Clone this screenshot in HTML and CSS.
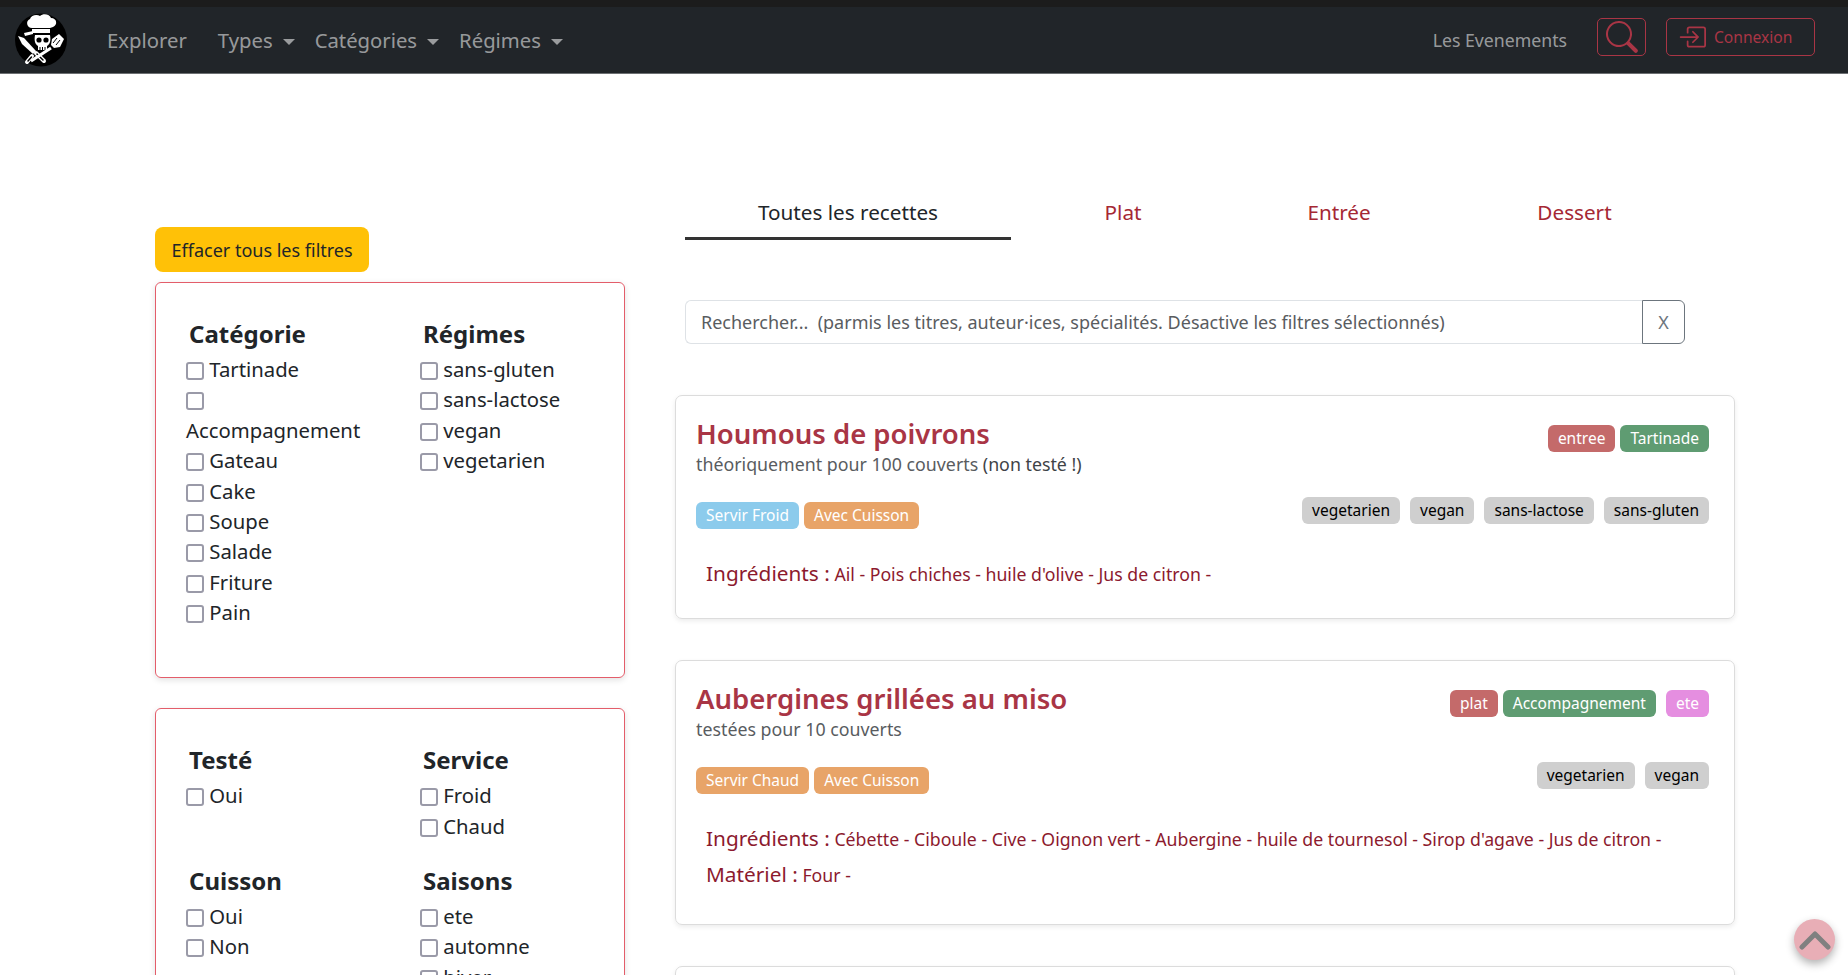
FILE: index.html
```html
<!DOCTYPE html>
<html lang="fr">
<head>
    <meta charset="UTF-8">
    <title>Recettes</title>
    <link rel="stylesheet" href="styles.css">
</head>
<body>

    <nav class="navbar">
        <a class="logo" href="#">
            <svg width="52" height="54" viewBox="0 0 52 54">
                <ellipse cx="26" cy="27" rx="26" ry="26.5" fill="#000"/>
                <!-- toque -->
                <path d="M17 15c-5 0-7-7-2-9 1-4 7-5 10-3 3-3 10-2 11 2 6 0 7 7 2 9l-3 1H19z" fill="#fff"/>
                <!-- bandana -->
                <path d="M17 16h18v4H17z" fill="#fff"/>
                <path d="M18 18L9 20l1 3 8-2" fill="#fff"/>
                <!-- skull -->
                <path d="M20 22h15c1 6 0 9-3 11v4H23v-4c-3-2-4-5-3-11z" fill="#fff"/>
                <circle cx="24" cy="27" r="2.600" fill="#000"/>
                <circle cx="31" cy="27" r="2.600" fill="#000"/>
                <path d="M25 34v3M27.500 34v3M30 34v3" stroke="#000" stroke-width="1"/>
                <!-- knife -->
                <path d="M3 23l6 2 12 13-3 3L7 31z" fill="#fff"/>
                <path d="M21 40l8 8" stroke="#fff" stroke-width="4" stroke-linecap="round"/>
                <path d="M22 41l6 6" stroke="#000" stroke-width="1.500" stroke-linecap="round"/>
                <!-- spatula -->
                <path d="M44 21l5 5-4 8-6 1-3-3 1-6z" fill="#fff"/>
                <path d="M42 25l-4 5M45 27l-4 5" stroke="#000" stroke-width="1"/>
                <path d="M36 35L16 48" stroke="#fff" stroke-width="3"/>
                <path d="M17 43l-5 6" stroke="#fff" stroke-width="4" stroke-linecap="round"/>
                <path d="M16.500 44l-3.500 4" stroke="#000" stroke-width="1.500" stroke-linecap="round"/>
            </svg>
        </a>
        <ul class="nav-links">
            <li class="nav-first"><a href="#">Explorer</a></li>
            <li><a href="#" class="caret">Types</a></li>
            <li><a href="#" class="caret">Catégories</a></li>
            <li><a href="#" class="caret">Régimes</a></li>
        </ul>
        <div class="nav-right">
            <a href="#" class="events">Les Evenements</a>
            <button class="btn-outline btn-search" aria-label="Rechercher">
                <svg width="32" height="32" viewBox="0 0 16 16" fill="currentColor">
                    <path d="M11.742 10.344a6.5 6.5 0 1 0-1.397 1.398l3.85 3.85a1 1 0 0 0 1.415-1.414l-3.85-3.85zM6.5 12a5.5 5.5 0 1 1 0-11 5.5 5.5 0 0 1 0 11z"/>
                </svg>
            </button>
            <button class="btn-outline btn-login">
                <svg width="28" height="28" viewBox="0 0 16 16" fill="currentColor">
                    <path fill-rule="evenodd" d="M6 3.5a.5.5 0 0 1 .5-.5h8a.5.5 0 0 1 .5.5v9a.5.5 0 0 1-.5.5h-8a.5.5 0 0 1-.5-.5v-2a.5.5 0 0 0-1 0v2A1.5 1.5 0 0 0 6.500 14h8a1.500 1.500 0 0 0 1.500-1.500v-9A1.500 1.500 0 0 0 14.500 2h-8A1.500 1.500 0 0 0 5 3.500v2a.5.5 0 0 0 1 0v-2z"/>
                    <path fill-rule="evenodd" d="M11.854 8.354a.5.5 0 0 0 0-.708l-3-3a.5.5 0 1 0-.708.708L10.293 7.500H1.500a.5.5 0 0 0 0 1h8.793l-2.147 2.146a.5.5 0 0 0 .708.708l3-3z"/>
                </svg>
                Connexion
            </button>
        </div>
    </nav>

    <main class="page">
        <aside class="filters">
            <button class="btn-clear">Effacer tous les filtres</button>

            <div class="filter-box">
                <div class="filter-group">
                    <h3>Catégorie</h3>
                    <label><input type="checkbox"> Tartinade</label>
                    <label><input type="checkbox"> Accompagnement</label>
                    <label><input type="checkbox"> Gateau</label>
                    <label><input type="checkbox"> Cake</label>
                    <label><input type="checkbox"> Soupe</label>
                    <label><input type="checkbox"> Salade</label>
                    <label><input type="checkbox"> Friture</label>
                    <label><input type="checkbox"> Pain</label>
                </div>
                <div class="filter-group">
                    <h3>Régimes</h3>
                    <label><input type="checkbox"> sans-gluten</label>
                    <label><input type="checkbox"> sans-lactose</label>
                    <label><input type="checkbox"> vegan</label>
                    <label><input type="checkbox"> vegetarien</label>
                </div>
            </div>

            <div class="filter-box">
                <div class="filter-group">
                    <h3>Testé</h3>
                    <label><input type="checkbox"> Oui</label>
                </div>
                <div class="filter-group">
                    <h3>Service</h3>
                    <label><input type="checkbox"> Froid</label>
                    <label><input type="checkbox"> Chaud</label>
                </div>
                <div class="filter-group">
                    <h3>Cuisson</h3>
                    <label><input type="checkbox"> Oui</label>
                    <label><input type="checkbox"> Non</label>
                </div>
                <div class="filter-group">
                    <h3>Saisons</h3>
                    <label><input type="checkbox"> ete</label>
                    <label><input type="checkbox"> automne</label>
                    <label><input type="checkbox"> hiver</label>
                </div>
            </div>
        </aside>

        <section class="recipes">
            <div class="tabs">
                <a href="#" class="tab active">Toutes les recettes</a>
                <a href="#" class="tab tab-plat">Plat</a>
                <a href="#" class="tab tab-entree">Entrée</a>
                <a href="#" class="tab tab-dessert">Dessert</a>
            </div>

            <div class="search-row">
                <input class="search-input" type="text" placeholder="Rechercher...  (parmis les titres, auteur·ices, spécialités. Désactive les filtres sélectionnés)">
                <button class="search-clear">X</button>
            </div>

            <article class="card">
                <div class="card-top">
                    <div>
                        <h2>Houmous de poivrons</h2>
                        <p class="covers">théoriquement pour 100 couverts <span class="untested">(non testé !)</span></p>
                    </div>
                    <div class="tags tags-type">
                        <span class="tag tag-red">entree</span>
                        <span class="tag tag-green">Tartinade</span>
                    </div>
                </div>
                <div class="card-mid">
                    <div class="tags tags-service">
                        <span class="tag tag-blue">Servir Froid</span>
                        <span class="tag tag-orange">Avec Cuisson</span>
                    </div>
                    <div class="tags tags-diet">
                        <span class="tag tag-grey">vegetarien</span>
                        <span class="tag tag-grey">vegan</span>
                        <span class="tag tag-grey">sans-lactose</span>
                        <span class="tag tag-grey">sans-gluten</span>
                    </div>
                </div>
                <p class="line"><strong>Ingrédients :</strong> Ail - Pois chiches - huile d'olive - Jus de citron -</p>
            </article>

            <article class="card">
                <div class="card-top">
                    <div>
                        <h2>Aubergines grillées au miso</h2>
                        <p class="covers">testées pour 10 couverts</p>
                    </div>
                    <div class="tags tags-type">
                        <span class="tag tag-red">plat</span>
                        <span class="tag tag-green">Accompagnement</span>
                        <span class="tag tag-pink">ete</span>
                    </div>
                </div>
                <div class="card-mid">
                    <div class="tags tags-service">
                        <span class="tag tag-orange">Servir Chaud</span>
                        <span class="tag tag-orange">Avec Cuisson</span>
                    </div>
                    <div class="tags tags-diet">
                        <span class="tag tag-grey">vegetarien</span>
                        <span class="tag tag-grey">vegan</span>
                    </div>
                </div>
                <p class="line"><strong>Ingrédients :</strong> Cébette - Ciboule - Cive - Oignon vert - Aubergine - huile de tournesol - Sirop d'agave - Jus de citron -</p>
                <p class="line"><strong>Matériel :</strong> Four -</p>
            </article>

            <article class="card card-empty"></article>
        </section>
    </main>

    <button class="scroll-top" aria-label="Haut de page">
        <svg width="32" height="20" viewBox="0 0 32 20">
            <path d="M3 17L16 4l13 13" fill="none" stroke="#808080" stroke-width="5" stroke-linecap="round" stroke-linejoin="round"/>
        </svg>
    </button>

</body>
</html>
```

FILE: styles.css
```css
* {
    box-sizing: border-box;
}

html, body {
    height: 975px;
    overflow: hidden;
}

body {
    margin: 0;
    background-color: #fff;
    color: #212529;
    font-family: 'Noto Sans', sans-serif;
    font-size: 20px;
    line-height: 30.4px;
}

/* Top bar */
.navbar {
    display: flex;
    align-items: center;
    height: 74px;
    background-color: #212529;
    border-top: 7px solid #1c1c1c;
    border-bottom: 1px solid #6c6f72;
    padding: 0 10px 0 15px;
}

.logo {
    display: flex;
    width: 52px;
    margin-right: 32px;
}

.nav-links {
    display: flex;
    list-style: none;
    margin: 0;
    padding: 1px 0 0;
    gap: 4px;
}

.nav-first {
    margin-right: 11px;
}

.nav-links a {
    color: rgba(255, 255, 255, 0.55);
    text-decoration: none;
    font-size: 20.3px;
    padding: 0 8px;
    display: block;
}

.caret::after {
    content: "";
    display: inline-block;
    margin-left: 10px;
    vertical-align: 3px;
    border-top: 6px solid;
    border-left: 6px solid transparent;
    border-right: 6px solid transparent;
}

.nav-right {
    display: flex;
    align-items: center;
    margin-left: auto;
    padding-right: 23px;
}

.events {
    color: rgba(255, 255, 255, 0.55);
    text-decoration: none;
    font-size: 17.7px;
    margin-right: 30px;
}

.btn-outline {
    display: flex;
    align-items: center;
    justify-content: center;
    height: 38px;
    margin-top: -6px;
    background: none;
    border: 1px solid #a93545;
    border-radius: 5px;
    color: #a93545;
    font-family: inherit;
    font-size: 15.6px;
}

.btn-search {
    width: 49px;
    padding: 0;
    margin-right: 20px;
}

.btn-login {
    width: 149px;
    justify-content: flex-start;
    gap: 8px;
    padding: 0 0 0 11px;
}

/* Page columns */
.page {
    display: flex;
    padding: 0 113px 0 155px;
}

.filters {
    width: 470px;
    flex-shrink: 0;
    padding-top: 153px;
    margin-right: 50px;
}

.btn-clear {
    display: block;
    height: 45px;
    padding: 0 16.5px;
    background-color: #ffc107;
    border: none;
    border-radius: 8px;
    color: #212529;
    font-family: inherit;
    font-size: 18px;
}

.filter-box {
    display: grid;
    grid-template-columns: 234px 1fr;
    row-gap: 22px;
    margin: 10px 0 30px;
    padding: 33px 20px 49.5px 30px;
    border: 1px solid #e35d6a;
    border-radius: 6px;
    box-shadow: 0 2px 6px rgba(0, 0, 0, 0.12);
}

.filter-group h3 {
    margin: 0 0 2px;
    font-size: 24px;
    line-height: 36px;
    font-weight: 700;
    padding-left: 3px;
}

.filter-group label {
    display: block;
    width: 180px;
    font-size: 20.3px;
}

.filter-group input {
    appearance: none;
    width: 18px;
    height: 18px;
    margin: 0;
    vertical-align: -3px;
    border: 2.5px solid #9a9aa8;
    border-radius: 3px;
    background-color: #fff;
}

/* Recipes column */
.recipes {
    flex: 1;
    min-width: 0;
    padding-top: 120px;
}

.tabs {
    display: flex;
    margin-left: 10px;
    height: 46px;
}

.tab {
    display: block;
    color: #a52834;
    text-decoration: none;
    text-align: center;
    font-size: 20.7px;
    line-height: 37px;
}

.tab.active {
    width: 326px;
    color: #212529;
    border-bottom: 3px solid #333;
}

.tab-plat {
    width: 224px;
}

.tab-entree {
    width: 208px;
}

.tab-dessert {
    width: 263px;
}

.search-row {
    display: flex;
    margin: 60px 0 0 10px;
    width: 1000px;
}

.search-input {
    flex: 1;
    height: 44px;
    padding: 0 15px;
    border: 1px solid #dee2e6;
    border-right: none;
    border-radius: 6px 0 0 6px;
    font-family: inherit;
    font-size: 18px;
    outline: none;
}

.search-input::placeholder {
    color: #595c5f;
    opacity: 1;
}

.search-clear {
    width: 43px;
    height: 44px;
    padding: 0;
    background: #fff;
    border: 1px solid #6c757d;
    border-radius: 0 6px 6px 0;
    color: #6c757d;
    font-family: inherit;
    font-size: 18px;
}

.card {
    margin-top: 51px;
    padding: 21px 25px 0 20px;
    height: 224px;
    border: 1px solid #dcdcdc;
    border-radius: 7px;
    box-shadow: 0 2px 5px rgba(0, 0, 0, 0.08);
}

.card + .card {
    margin-top: 41px;
    height: 265px;
}

.card.card-empty {
    height: 100px;
}

.card-top,
.card-mid {
    display: flex;
    justify-content: space-between;
    align-items: flex-start;
}

.card h2 {
    margin: 0;
    color: #a93545;
    font-size: 27.5px;
    line-height: 34px;
    font-weight: 600;
}

.covers {
    margin: -1px 0 0;
    color: #595c5f;
    font-size: 17.8px;
    line-height: 28px;
}

.untested {
    color: #3f4347;
}

.tags {
    display: flex;
}

.tags-type {
    gap: 5px;
    padding-top: 8px;
}

.tags-diet {
    gap: 10px;
    padding-top: 1px;
}

.tags-service {
    gap: 5px;
    padding-top: 6px;
}

.card-mid {
    margin-top: 18px;
    height: 60px;
}

.tag {
    display: block;
    padding: 0 10px;
    height: 27px;
    line-height: 27px;
    border-radius: 6px;
    font-size: 15.5px;
    color: #fff;
}

.tag-red {
    background-color: #c46a6a;
}

.tag-green {
    background-color: #5f9c72;
}

.tag-blue {
    background-color: #8ccbec;
}

.tag-orange {
    background-color: #e8a468;
}

.tag-pink {
    background-color: #e58ee0;
    margin-left: 5px;
}

.tag-grey {
    background-color: #cfcfcf;
    color: #000;
}

.line {
    margin: 0 0 0 10px;
    color: #8c1a2e;
    font-size: 17.7px;
    line-height: 35px;
}

.line strong {
    font-size: 20.8px;
    font-weight: 400;
}

.scroll-top {
    position: fixed;
    right: 13px;
    bottom: 15px;
    display: flex;
    align-items: center;
    justify-content: center;
    width: 41px;
    height: 41px;
    padding: 0;
    border: none;
    border-radius: 50%;
    background-color: #e8aeb6;
    box-shadow: 0 4px 8px rgba(0, 0, 0, 0.3);
}
```
